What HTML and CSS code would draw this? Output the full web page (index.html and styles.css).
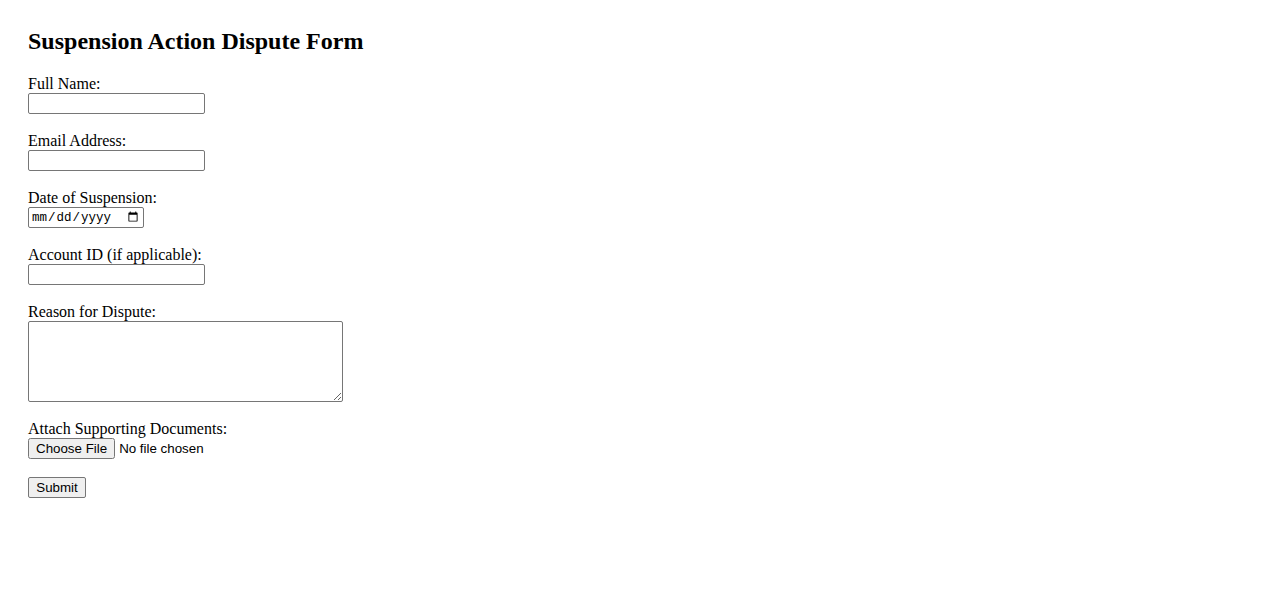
FILE: index.html
```html
<!DOCTYPE html>
<html>
<head>
<meta charset="utf-8">
<title>Suspension Action Dispute Form</title>
<link rel="stylesheet" href="styles.css">
</head>
<body>
<h2 class="title">Suspension Action Dispute Form</h2>
<form class="form">
  <div class="field">
    <label class="label" for="name">Full Name:</label>
    <input class="text" type="text" id="name">
  </div>
  <div class="field">
    <label class="label" for="email">Email Address:</label>
    <input class="text" type="email" id="email">
  </div>
  <div class="field">
    <label class="label" for="date">Date of Suspension:</label>
    <input class="date" type="date" id="date">
  </div>
  <div class="field">
    <label class="label" for="acct">Account ID (if applicable):</label>
    <input class="text" type="text" id="acct">
  </div>
  <div class="field">
    <label class="label" for="reason">Reason for Dispute:</label>
    <textarea class="area" id="reason"></textarea>
  </div>
  <div class="field">
    <label class="label" for="docs">Attach Supporting Documents:</label>
    <input class="file" type="file" id="docs">
  </div>
  <button class="submit" type="submit">Submit</button>
</form>
</body>
</html>
```
FILE: styles.css
```css
body {
  margin: 8px;
  padding: 20px;
  font-family: "Liberation Serif", "Times New Roman", serif;
  font-size: 16px;
  color: #000;
  background: #fff;
}
.title {
  margin: 0 0 20px 0;
  font-size: 24px;
  font-weight: bold;
}
.field {
  margin-bottom: 18px;
}
.label {
  display: block;
  line-height: 18px;
}
.text, .date {
  display: block;
  box-sizing: border-box;
  height: 21px;
  border: 1px solid #767676;
  border-radius: 2px;
  padding: 1px 2px;
  font-family: "Liberation Sans", Arial, sans-serif;
  font-size: 13.33px;
  margin: 0;
}
.text { width: 177px; }
.date {
  width: 116px;
  font-family: "Liberation Mono", monospace;
  font-size: 12.5px;
}
.area {
  display: block;
  box-sizing: border-box;
  width: 315px;
  height: 81px;
  border: 1px solid #767676;
  border-radius: 2px;
  margin: 0;
}
.file {
  display: block;
  height: 21px;
  font-family: "Liberation Sans", Arial, sans-serif;
  font-size: 13.33px;
  margin: 0;
}
.submit {
  display: block;
  box-sizing: border-box;
  width: 58px;
  height: 21px;
  font-family: "Liberation Sans", Arial, sans-serif;
  font-size: 13.33px;
  margin: 0;
  padding: 1px 6px;
  border: 1px solid #767676;
  border-radius: 2px;
  background: #efefef;
  color: #000;
}
```
